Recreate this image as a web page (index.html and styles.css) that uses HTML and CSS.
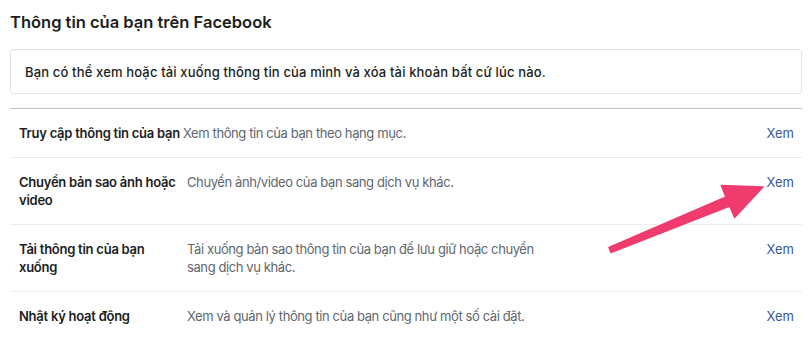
FILE: index.html
```html
<!DOCTYPE html>
<html lang="vi">
<head>
<meta charset="UTF-8">
<meta name="viewport" content="width=device-width, initial-scale=1.0">
<title>Thông tin của bạn trên Facebook</title>
<link rel="stylesheet" href="styles.css">
</head>
<body>

<div class="page">
  <h2>Thông tin của bạn trên Facebook</h2>

  <div class="notice">Bạn có thể xem hoặc tải xuống thông tin của mình và xóa tài khoản bất cứ lúc nào.</div>

  <div class="list">
    <div class="row">
      <div class="label">Truy cập thông tin của bạn</div>
      <div class="desc">Xem thông tin của bạn theo hạng mục.</div>
      <a class="link" href="#">Xem</a>
    </div>
    <div class="row">
      <div class="label">Chuyển bản sao ảnh hoặc video</div>
      <div class="desc">Chuyển ảnh/video của bạn sang dịch vụ khác.</div>
      <a class="link" href="#">Xem</a>
    </div>
    <div class="row">
      <div class="label">Tải thông tin của bạn xuống</div>
      <div class="desc">Tải xuống bản sao thông tin của bạn để lưu giữ hoặc chuyển sang dịch vụ khác.</div>
      <a class="link" href="#">Xem</a>
    </div>
    <div class="row">
      <div class="label">Nhật ký hoạt động</div>
      <div class="desc">Xem và quản lý thông tin của bạn cũng như một số cài đặt.</div>
      <a class="link" href="#">Xem</a>
    </div>
  </div>

  <svg class="arrow" width="810" height="338" viewBox="0 0 810 338">
    <polygon points="609,247.5 726,196.9 721.4,185.6 763,187 734.6,217.4 729.8,206.1 611,252.5" fill="#ef3b6d" stroke="#ef3b6d" stroke-width="1.5" stroke-linejoin="round"/>
  </svg>
</div>

</body>
</html>
```

FILE: styles.css
```css
body {
  margin: 0;
  background: #fff;
  font-family: Inter, "Noto Sans", sans-serif;
  color: #1c1e21;
}

.page {
  position: relative;
  width: 792px;
  padding: 0 8px 0 10px;
  height: 338px;
  overflow: hidden;
}

h2 {
  margin: 0;
  padding-top: 12px;
  font-size: 16.5px;
  font-weight: 600;
  line-height: 21px;
}

.notice {
  margin-top: 16px;
  height: 45px;
  box-sizing: border-box;
  border: 1px solid #e3e4e6;
  border-radius: 3px;
  padding: 0 14px;
  display: flex;
  align-items: center;
  font-size: 13px;
  font-weight: 500;
  letter-spacing: 0.15px;
}

.list {
  margin-top: 14px;
  border-top: 1px solid #bcc0c4;
}

.row {
  display: grid;
  grid-template-columns: 164px 1fr 40px;
  padding: 15px 8px 15px 9px;
  border-bottom: 1px solid #ebedf0;
  font-size: 13px;
  line-height: 18px;
}

.label {
  font-weight: 600;
  letter-spacing: -0.25px;
  white-space: nowrap;
}

.row:nth-child(n+2) .label {
  white-space: normal;
  padding-right: 4px;
}

.row:nth-child(n+2) .desc {
  margin-left: 4px;
}

.desc {
  color: #606770;
  letter-spacing: -0.4px;
  max-width: 368px;
}

.link {
  color: #385898;
  text-decoration: none;
  text-align: right;
}

.arrow {
  position: absolute;
  left: 0;
  top: 0;
  pointer-events: none;
}
```
